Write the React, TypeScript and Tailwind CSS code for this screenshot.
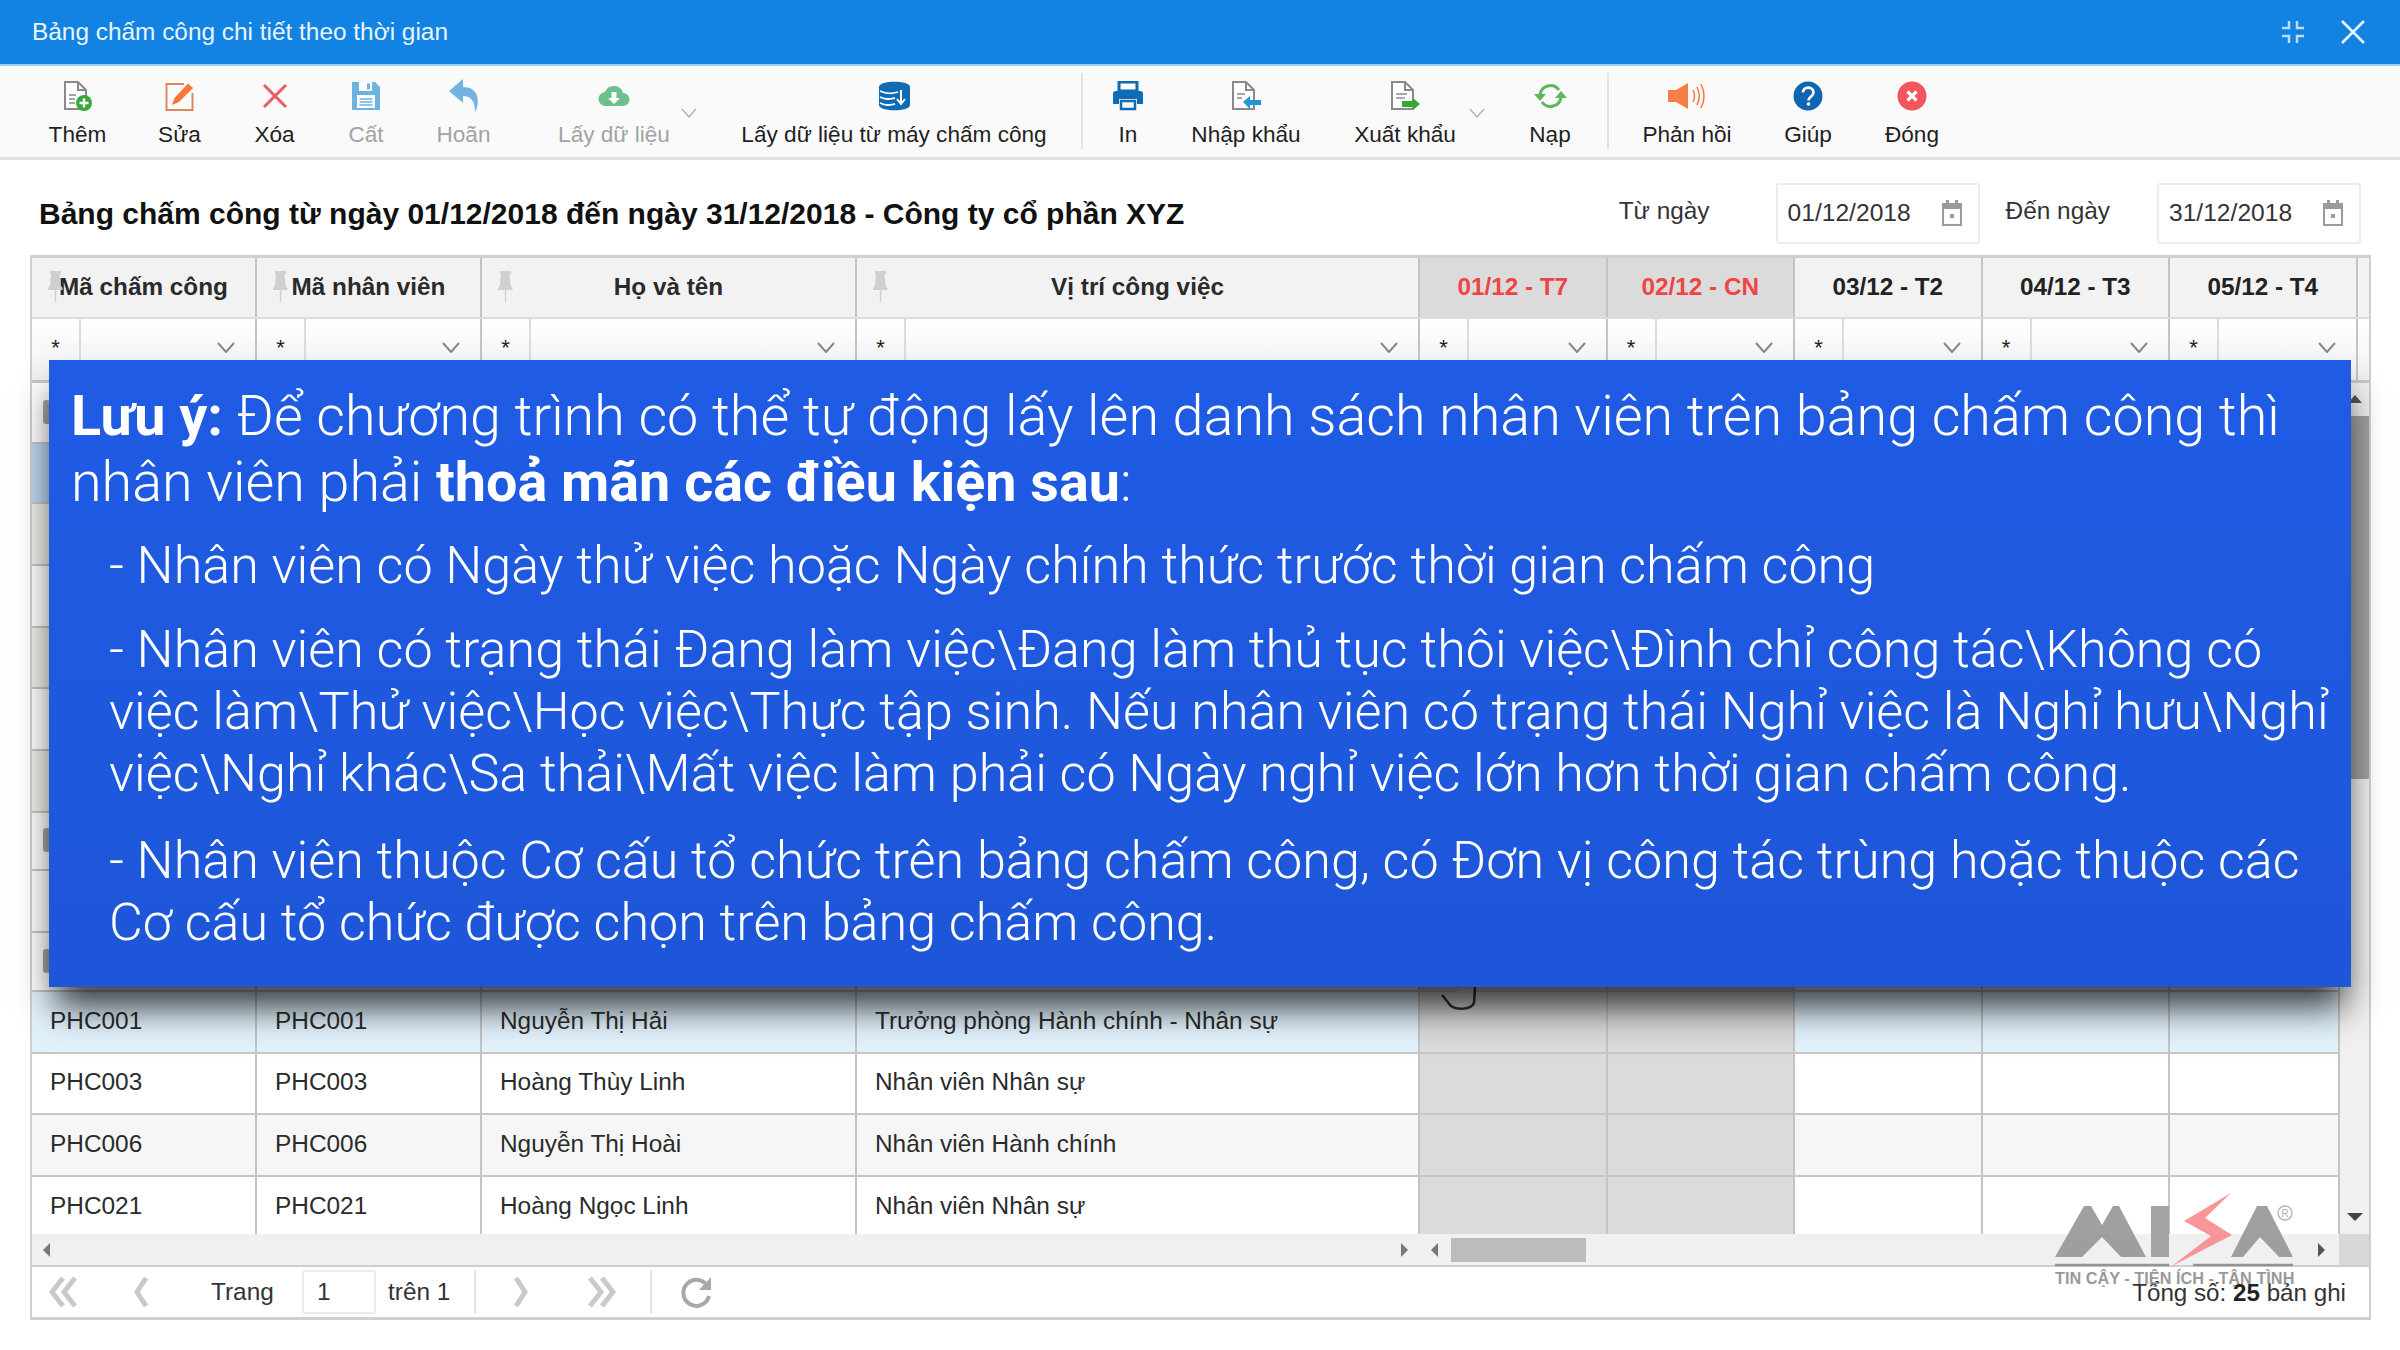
import React from "react";

const sans = "font-['Liberation_Sans',Arial,sans-serif]";

function Doc({ children }: { children?: React.ReactNode }) {
  return (
    <svg width="32" height="32" viewBox="0 0 32 32" fill="none">
      <path d="M3 2h13l8 8v19H3z" fill="#fff" stroke="#8a8a8a" strokeWidth="2" />
      <path d="M16 2v8h8" stroke="#8a8a8a" strokeWidth="2" />
      {children}
    </svg>
  );
}

const IconAdd = () => (
  <Doc>
    <path d="M7 15h7M7 19h6M7 23h6" stroke="#8a8a8a" strokeWidth="1.6" />
    <circle cx="22" cy="23" r="8" fill="#3aa83f" />
    <path d="M22 18.5v9M17.5 23h9" stroke="#fff" strokeWidth="2.4" />
  </Doc>
);
const IconEdit = () => (
  <svg width="32" height="32" viewBox="0 0 32 32" fill="none">
    <path d="M20 4H2.5v26h26V13" stroke="#e0875a" strokeWidth="2" />
    <path d="M8 25l2.5-7L24 3.5l5 4.5-14 14z" fill="#f4763a" />
  </svg>
);
const IconDelete = () => (
  <svg width="28" height="28" viewBox="0 0 28 28" fill="none">
    <path d="M3 3l22 22M25 3L3 25" stroke="#ee5a5f" strokeWidth="3" />
  </svg>
);
const IconSave = () => (
  <svg width="30" height="30" viewBox="0 0 30 30">
    <path d="M1 1h23l5 5v23H1z" fill="#6db2e0" />
    <rect x="8" y="1" width="13" height="9" fill="#fff" />
    <rect x="16" y="2.5" width="3" height="6" fill="#6db2e0" />
    <rect x="6" y="14" width="18" height="13" fill="#fff" />
    <path d="M8.5 18h13M8.5 21h13M8.5 24h13" stroke="#6db2e0" strokeWidth="1.5" />
  </svg>
);
const IconUndo = () => (
  <svg width="32" height="36" viewBox="0 0 32 36">
    <path d="M15 1L1 13l14 12v-7c8 0 12 5 12 16 5-8 5-25-12-25z" fill="#74b3e0" />
  </svg>
);
const IconCloud = () => (
  <svg width="32" height="22" viewBox="0 0 32 22">
    <path d="M8 21a7 7 0 0 1-1-14 9.5 9.5 0 0 1 18 1 6.5 6.5 0 0 1 0 13z" fill="#6cc08b" />
    <path d="M13.5 7h5v6h3.5l-6 6-6-6h3.5z" fill="#fff" />
  </svg>
);
const IconDb = () => (
  <svg width="33" height="30" viewBox="0 0 33 30">
    <path d="M1 6c0-7 31-7 31 0v18c0 7-31 7-31 0z" fill="#0f6cb4" />
    <path d="M2 10c6 3 12 3 18 1M2 16c6 3 10 2 15 1M2 22c6 3 10 2 15 1" stroke="#fff" strokeWidth="1.8" fill="none" />
    <path d="M23 9v13M19 18l4 5 4-5" stroke="#fff" strokeWidth="2" fill="none" />
  </svg>
);
const IconPrint = () => (
  <svg width="32" height="30" viewBox="0 0 32 30">
    <path d="M7 1h18v9H7z" fill="none" stroke="#0f6cb4" strokeWidth="3" />
    <path d="M4 10h24a3 3 0 0 1 3 3v10h-6v-5H7v5H1V13a3 3 0 0 1 3-3z" fill="#0f6cb4" />
    <path d="M9 20h14v8H9z" fill="none" stroke="#0f6cb4" strokeWidth="2.5" />
  </svg>
);
const IconImport = () => (
  <Doc>
    <path d="M7 14h8M7 18h5" stroke="#8a8a8a" strokeWidth="1.6" />
    <path d="M13 22l7-6v4h11v5H20v4z" fill="#2196d8" />
  </Doc>
);
const IconExport = () => (
  <Doc>
    <path d="M7 14h11M7 18h9" stroke="#8a8a8a" strokeWidth="1.6" />
    <path d="M31 24l-7-6v3H13v6h11v3z" fill="#35a82f" />
  </Doc>
);
const IconReload = () => (
  <svg width="33" height="26" viewBox="0 0 33 26" fill="none">
    <path d="M6 12a10.5 10.5 0 0 1 19-5" stroke="#5cb85c" strokeWidth="3" />
    <path d="M27 14a10.5 10.5 0 0 1-19 5" stroke="#5cb85c" strokeWidth="3" />
    <path d="M0 11h12l-6 7zM21 15h12l-6-7z" fill="#5cb85c" />
  </svg>
);
const IconSpeaker = () => (
  <svg width="40" height="28" viewBox="0 0 40 28" fill="none">
    <path d="M1 8h8L21 1v26L9 20H1z" fill="#f57f47" />
    <path d="M26 8c2 4 2 8 0 12M30 5c3 6 3 12 0 18M34 2c4 8 4 16 0 24" stroke="#f57f47" strokeWidth="1.6" />
  </svg>
);
const IconHelp = () => (
  <svg width="30" height="30" viewBox="0 0 30 30">
    <circle cx="15" cy="15" r="14.5" fill="#0f65b2" />
    <path d="M10 11.5c0-6.5 10.5-6.5 10.5 0 0 4-5 4-5 8" fill="none" stroke="#fff" strokeWidth="2.6" />
    <circle cx="15.5" cy="23" r="1.8" fill="#fff" />
  </svg>
);
const IconClose = () => (
  <svg width="30" height="30" viewBox="0 0 30 30">
    <circle cx="15" cy="15" r="14.5" fill="#f2555a" />
    <path d="M10.5 10.5l9 9M19.5 10.5l-9 9" stroke="#fff" strokeWidth="3.2" />
  </svg>
);
const Chevron = ({ className = "" }: { className?: string }) => (
  <svg width="16" height="10" viewBox="0 0 16 10" fill="none" className={className}>
    <path d="M1 1l7 8 7-8" stroke="#b5b5b5" strokeWidth="1.5" />
  </svg>
);
const FilterChevron = () => (
  <svg width="18" height="11" viewBox="0 0 18 11" fill="none">
    <path d="M1 1l8 9 8-9" stroke="#888" strokeWidth="2" />
  </svg>
);
const Pin = () => (
  <svg width="15" height="32" viewBox="0 0 15 32" fill="#cfcfcf">
    <path d="M2 0h11v3h-1.500l1 11 2 3v2H0v-2l2-3 1-11H2z" />
    <rect x="6.800" y="19" width="1.400" height="12" />
  </svg>
);
const Calendar = () => (
  <svg width="22" height="26" viewBox="0 0 22 26">
    <path d="M1 3h4V0h3v3h6V0h3v3h4v23H1z" fill="#9b9b9b" />
    <rect x="3" y="9" width="16" height="15" fill="#fff" />
    <rect x="9" y="14" width="4" height="4" fill="#9b9b9b" />
  </svg>
);
const Pager = ({ d }: { d: string }) => (
  <svg width="34" height="32" viewBox="0 0 34 32" fill="none">
    <path d={d} stroke="#c9c9c9" strokeWidth="5" />
  </svg>
);

function Tool({ label, icon, className, muted }: { label: string; icon: React.ReactNode; className: string; muted?: boolean }) {
  return (
    <div className={`flex shrink-0 flex-col items-center pt-[11px] ${className}`}>
      <div className="flex h-[38px] items-center justify-center">{icon}</div>
      <div className={`mt-[5px] whitespace-nowrap text-[22.6px] leading-[30px] ${muted ? "text-[#a3a3a3]" : "text-[#1f1f1f]"}`}>{label}</div>
    </div>
  );
}

const Sep = ({ className }: { className: string }) => <div className={`mt-[7px] h-[76px] w-[2px] shrink-0 bg-[#e3e3e3] ${className}`} />;

const pinned = ["Mã chấm công", "Mã nhân viên", "Họ và tên", "Vị trí công việc"];
const days = ["01/12 - T7", "02/12 - CN", "03/12 - T2", "04/12 - T3", "05/12 - T4"];
const colWidths = ["w-[225px]", "w-[225px]", "w-[375px]", "w-[563px]", "w-[187.5px]", "w-[187.5px]", "w-[187.5px]", "w-[187.5px]", "w-[187.5px]"];

function FilterCell({ width }: { width: string }) {
  return (
    <div className={`flex h-full shrink-0 border-r-2 border-[#c4c4c4] ${width}`}>
      <div className="flex w-[49px] items-center justify-center border-r-2 border-[#dcdcdc] pb-[4px] text-[22px] text-[#222]">*</div>
      <div className="flex flex-1 items-center justify-end pb-[4px] pr-[20px]">
        <FilterChevron />
      </div>
    </div>
  );
}

function Row({ h, bg, cells, mark }: { h: string; bg: string; cells?: string[]; mark?: boolean }) {
  return (
    <div className={`flex shrink-0 border-b-2 border-[#c6c6c6] ${h} ${bg}`}>
      {colWidths.map((w, i) => (
        <div
          key={i}
          className={`flex items-center border-r-2 border-[#c4c4c4] pb-[2px] pl-[18px] text-[24.4px] text-[#2b2b2b] ${i === 8 ? "w-[170px] border-r-0" : w} ${i === 4 || i === 5 ? "bg-[#dbdbdb]" : ""}`}
        >
          {i === 0 && mark ? <div className="-ml-[7px] h-[24px] w-[7px] rounded-[3px] bg-[#a9a6a0]" /> : cells?.[i]}
        </div>
      ))}
    </div>
  );
}

export default function App() {
  return (
    <div className={`relative h-[1350px] w-[2400px] overflow-hidden bg-white ${sans}`}>
      {/* Title bar */}
      <div className="flex h-[66px] items-center justify-between border-b-2 border-[#9ad0f5] bg-[#1283e3] pl-[32px] pr-[34px]">
        <div className="text-[24.4px] text-[#eaf5ff]">Bảng chấm công chi tiết theo thời gian</div>
        <div className="flex items-center gap-[36px]">
          <svg width="24" height="24" viewBox="0 0 24 24" fill="none" stroke="#bcdcf7" strokeWidth="2.500" className="translate-x-[1px]">
            <path d="M8 1v7H1M16 1v7h7M8 23v-7H1M16 23v-7h7" />
          </svg>
          <svg width="26" height="26" viewBox="0 0 26 26" fill="none" stroke="#eaf5ff" strokeWidth="2.600">
            <path d="M2 2l22 22M24 2L2 24" />
          </svg>
        </div>
      </div>

      {/* Toolbar */}
      <div className="flex h-[94px] items-start border-b-[3px] border-[#e0e0e0] bg-[#fafafa]">
        <Tool label="Thêm" icon={<IconAdd />} className="ml-[29px] w-[97px]" />
        <Tool label="Sửa" icon={<IconEdit />} className="w-[107px]" />
        <Tool label="Xóa" icon={<IconDelete />} className="w-[83px]" />
        <Tool label="Cất" icon={<IconSave />} className="w-[100px]" muted />
        <Tool label="Hoãn" icon={<IconUndo />} className="w-[95px]" muted />
        <Tool label="Lấy dữ liệu" icon={<IconCloud />} className="ml-[29px] w-[148px]" muted />
        <Chevron className="-ml-[7px] mt-[42px] shrink-0" />
        <Tool label="Lấy dữ liệu từ máy chấm công" icon={<IconDb />} className="ml-[27px] w-[340px]" />
        <Sep className="ml-[17px]" />
        <Tool label="In" icon={<IconPrint />} className="w-[90px]" />
        <Tool label="Nhập khẩu" icon={<IconImport />} className="w-[146px]" />
        <Tool label="Xuất khẩu" icon={<IconExport />} className="ml-[14px] w-[144px]" />
        <Chevron className="-ml-[8px] mt-[42px] shrink-0" />
        <Tool label="Nạp" icon={<IconReload />} className="ml-[7px] w-[116px]" />
        <Sep className="-ml-[1px]" />
        <Tool label="Phản hồi" icon={<IconSpeaker />} className="w-[156px]" />
        <Tool label="Giúp" icon={<IconHelp />} className="w-[86px]" />
        <Tool label="Đóng" icon={<IconClose />} className="w-[122px]" />
      </div>

      {/* Heading and date range */}
      <div className="flex h-[95px] items-center pl-[39px] pt-[11px]">
        <h1 className="flex-1 text-[30px] font-bold text-[#111]">Bảng chấm công từ ngày 01/12/2018 đến ngày 31/12/2018 - Công ty cổ phần XYZ</h1>
        <div className="mr-[66px] -mt-[4px] text-[24.4px] text-[#333]">Từ ngày</div>
        <div className="flex h-[61px] w-[204px] items-center justify-between rounded-[3px] border-2 border-[#ececec] pl-[10px] pr-[15px] text-[24.6px] text-[#333]">
          01/12/2018
          <Calendar />
        </div>
        <div className="ml-[26px] mr-[47px] -mt-[4px] text-[24.4px] text-[#333]">Đến ngày</div>
        <div className="mr-[39px] flex h-[61px] w-[204px] items-center justify-between rounded-[3px] border-2 border-[#ececec] pl-[10px] pr-[15px] text-[24.6px] text-[#333]">
          31/12/2018
          <Calendar />
        </div>
      </div>

      {/* Grid */}
      <div className="mx-[30px] flex h-[1065px] w-[2341px] flex-col border-x-2 border-b-[3px] border-t-[3px] border-[#cfcfcf]">
        <div className="flex h-[61px] shrink-0 border-b-2 border-[#dcdcdc] bg-[#f2f2f2]">
          {pinned.map((t, i) => (
            <div key={t} className={`relative flex items-center justify-center border-r-2 border-[#c4c4c4] text-[24.3px] font-bold text-[#2a2a2a] ${colWidths[i]}`}>
              <span className="absolute left-[16px] top-[13px]"><Pin /></span>
              {t}
            </div>
          ))}
          {days.map((t, i) => (
            <div key={t} className={`flex w-[187.5px] items-center justify-center border-r-2 border-[#c4c4c4] text-[24.3px] font-bold ${i < 2 ? "bg-[#dbdbdb] text-[#ee4444]" : "text-[#222]"}`}>
              {t}
            </div>
          ))}
        </div>
        <div className="flex h-[64px] shrink-0 border-b-[3px] border-[#c8c8c8] bg-gradient-to-b from-white to-[#f1f1f1]">
          {colWidths.map((w, i) => (
            <FilterCell key={i} width={w} />
          ))}
        </div>
        <div className="flex h-[851px] shrink-0">
          <div className="w-[2308px] shrink-0 overflow-hidden">
            <Row h="h-[61px]" bg="bg-white" mark />
            <Row h="h-[60px]" bg="bg-[#bcd6ee]" />
            <Row h="h-[62px]" bg="bg-[#f1efeb]" />
            <Row h="h-[62px]" bg="bg-white" />
            <Row h="h-[61px]" bg="bg-[#f1efeb]" />
            <Row h="h-[62px]" bg="bg-white" />
            <Row h="h-[62px]" bg="bg-[#f1efeb]" />
            <Row h="h-[58px]" bg="bg-white" mark />
            <Row h="h-[62px]" bg="bg-white" />
            <Row h="h-[59px]" bg="bg-white" mark />
            <Row h="h-[62px]" bg="bg-[#e2f2fd]" cells={["PHC001", "PHC001", "Nguyễn Thị Hải", "Trưởng phòng Hành chính - Nhân sự"]} />
            <Row h="h-[61px]" bg="bg-white" cells={["PHC003", "PHC003", "Hoàng Thùy Linh", "Nhân viên Nhân sự"]} />
            <Row h="h-[62px]" bg="bg-[#f6f6f6]" cells={["PHC006", "PHC006", "Nguyễn Thị Hoài", "Nhân viên Hành chính"]} />
            <Row h="h-[62px]" bg="bg-white" cells={["PHC021", "PHC021", "Hoàng Ngọc Linh", "Nhân viên Nhân sự"]} />
          </div>
          {/* Vertical scrollbar */}
          <div className="flex w-[29px] shrink-0 flex-col items-center bg-[#f0f0f0]">
            <div className="mt-[12px] h-0 w-0 border-x-[7px] border-b-[8px] border-x-transparent border-b-[#555]" />
            <div className="ml-[6px] mt-[13px] h-[363px] w-[23px] bg-[#a2a2a2]" />
            <div className="mb-[13px] mt-auto h-0 w-0 border-x-[8px] border-t-[8px] border-x-transparent border-t-[#444]" />
          </div>
        </div>
        {/* Horizontal scrollbar */}
        <div className="flex h-[33px] shrink-0 items-center border-b-2 border-[#cfcfcf] bg-[#f0f0f0]">
          <div className="ml-[11px] h-0 w-0 border-y-[7px] border-r-[7px] border-y-transparent border-r-[#777]" />
          <div className="ml-[1351px] h-0 w-0 border-y-[7px] border-l-[7px] border-y-transparent border-l-[#777]" />
          <div className="ml-[23px] h-0 w-0 border-y-[7px] border-r-[7px] border-y-transparent border-r-[#777]" />
          <div className="ml-[13px] h-[24px] w-[135px] bg-[#bcbcbc]" />
          <div className="ml-[732px] h-0 w-0 border-y-[7px] border-l-[7px] border-y-transparent border-l-[#555]" />
          <div className="ml-auto h-full w-[30px] bg-[#d8d8d8]" />
        </div>
        {/* Pager */}
        <div className="flex flex-1 items-center text-[24.4px] text-[#333]">
          <div className="ml-[15px] w-[78px]"><Pager d="M16 2L5 16l11 14M28 2L17 16l11 14" /></div>
          <div className="w-[86px] pl-[5px]"><Pager d="M16 2L7 16l9 14" /></div>
          <span className="w-[91px]">Trang</span>
          <div className="flex h-[44px] w-[74px] items-center rounded-[3px] border-2 border-[#ececec] pl-[13px]">1</div>
          <span className="ml-[12px]">trên 1</span>
          <div className="ml-[24px] h-[44px] w-[2px] bg-[#e3e3e3]" />
          <div className="ml-[32px] w-[76px]"><Pager d="M8 2l9 14-9 14" /></div>
          <div className="w-[66px]"><Pager d="M6 2l11 14L6 30M18 2l11 14-11 14" /></div>
          <div className="h-[44px] w-[2px] bg-[#e3e3e3]" />
          <svg width="34" height="34" viewBox="0 0 34 34" fill="none" className="ml-[28px]">
            <path d="M28 12a13 13 0 1 0 1 9" stroke="#a8a8a8" strokeWidth="4" />
            <path d="M31 2v13H19z" fill="#a8a8a8" />
          </svg>
          <div className="ml-auto mr-[23px] pt-[2px] text-[24.2px]">
            Tổng số: <b className="font-bold text-[#222]">25</b> bản ghi
          </div>
        </div>
      </div>

      {/* Mouse cursor peeking out below the note */}
      <svg width="40" height="30" viewBox="0 0 40 30" fill="#dddddd" stroke="#333" strokeWidth="2.500" className="absolute left-[1440px] top-[982px]">
        <path d="M2 13l9 11c6 4 20 4 23-3l1-16" />
      </svg>

      {/* Note overlay */}
      <div className="absolute left-[49px] top-[360px] h-[627px] w-[2302px] bg-gradient-to-b from-[#1f5be4] to-[#1d56d8] pl-[22px] pr-[8px] pt-[23px] font-['Roboto',sans-serif] font-light text-white shadow-[0_26px_34px_-6px_rgba(0,0,0,0.78)]">
        <p className="text-[55.7px] leading-[66px]">
          <b className="font-bold">Lưu ý:</b> Để chương trình có thể tự động lấy lên danh sách nhân viên trên bảng chấm công thì nhân viên phải <b className="font-bold">thoả mãn các điều kiện sau</b>:
        </p>
        <div className="pl-[38px] text-[52.1px] leading-[62px]">
          <p className="mt-[20px]">- Nhân viên có Ngày thử việc hoặc Ngày chính thức trước thời gian chấm công</p>
          <p className="mt-[22px]">- Nhân viên có trạng thái Đang làm việc\Đang làm thủ tục thôi việc\Đình chỉ công tác\Không có việc làm\Thử việc\Học việc\Thực tập sinh. Nếu nhân viên có trạng thái Nghỉ việc là Nghỉ hưu\Nghỉ việc\Nghỉ khác\Sa thải\Mất việc làm phải có Ngày nghỉ việc lớn hơn thời gian chấm công.</p>
          <p className="mt-[25px]">- Nhân viên thuộc Cơ cấu tổ chức trên bảng chấm công, có Đơn vị công tác trùng hoặc thuộc các Cơ cấu tổ chức được chọn trên bảng chấm công.</p>
        </div>
      </div>

      {/* MISA watermark */}
      <div className="absolute left-[2055px] top-[1193px] w-[240px] opacity-90">
        <svg width="240" height="76" viewBox="0 0 240 76">
          <path d="M0 64L29 13h7l11 19 11-19h6l27 51H66L47 44 27 64z" fill="#969696" />
          <rect x="96" y="13" width="18" height="51" fill="#9c9c9c" />
          <path d="M176 0L129 28l27 15-39 30 60-31-27-17z" fill="#f98b8f" />
          <path d="M202 13h10l26 51h-14l-19-20-17 20h-12z" fill="#969696" />
          <path d="M0 72h114M138 72h100" stroke="#8c8c8c" strokeWidth="2.500" />
          <circle cx="230" cy="20" r="7" fill="none" stroke="#aaa" strokeWidth="1.300" />
          <text x="230" y="24" textAnchor="middle" fontSize="10" fill="#aaa">R</text>
        </svg>
        <div className="whitespace-nowrap text-[16.3px] font-bold leading-[18px] text-[#8f8f8f]">TIN CẬY - TIỆN ÍCH - TẬN TÌNH</div>
      </div>
    </div>
  );
}
